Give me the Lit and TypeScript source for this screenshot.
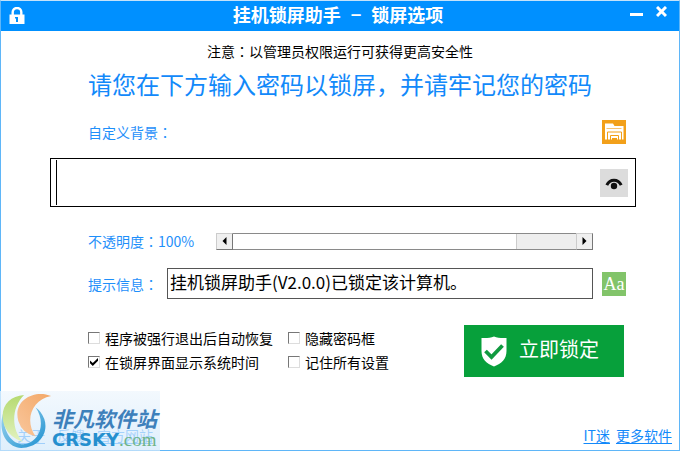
import { LitElement, html, css, svg } from "lit";
import { customElement, state } from "lit/decorators.js";

const colon = html`<span class="colon">：</span>`;

const lockIcon = html`<svg width="16" height="18" viewBox="0 0 16 18" aria-hidden="true">
  <path d="M3.7 8V5a4.3 4 0 0 1 8.6 0v3" fill="none" stroke="#fff" stroke-width="2.4" />
  <path d="M.5 7.5h15V17H.5z" fill="#fff" />
  <path d="M6 10h3v5H7v-3.4H6z" fill="#0090ff" />
</svg>`;

const folderIcon = html`<svg width="24" height="24" viewBox="0 0 24 24" aria-hidden="true">
  <path d="M3 19.5V3.5h8l1.500 2.500h9v13.500z" fill="#fff" />
  <path d="M4.500 8.500h15" stroke="#f6c372" fill="none" />
  <path d="M5.500 20v-8h14v8" fill="none" stroke="#f2a01a" />
  <path d="M8.500 20v-4.500h8V20" fill="none" stroke="#f2a01a" />
  <path d="M10 20v-2h5v2" fill="#f2a01a" />
</svg>`;

const eyeIcon = html`<svg width="28" height="28" viewBox="0 0 28 28" aria-hidden="true">
  <path d="M6.8 16.2C10 9.6 18 9.6 21.2 16.2" fill="none" stroke="#111" stroke-width="3" />
  <circle cx="14" cy="17" r="3.2" fill="#111" />
</svg>`;

const shieldIcon = html`<svg width="26" height="31" viewBox="0 0 26 31" aria-hidden="true">
  <path d="M13 .5c3.5 1.5 8 1.8 12.5 1.5V15c0 8-5 12.5-12.5 15.5C5.5 27.5.5 23 .5 15V2C5 2.3 9.5 2 13 .5z" fill="#fff" />
  <path d="M4.500 15l6 6L21.500 9.500" fill="none" stroke="#109a40" stroke-width="3.800" />
</svg>`;

const swirl = svg`
  <defs>
    <linearGradient id="ring" x1="0" y1="0" x2="1" y2="1">
      <stop offset="0" stop-color="#a5d9f0" /><stop offset="1" stop-color="#1b8fd0" />
    </linearGradient>
    <linearGradient id="leaf" x1="0" y1="0" x2="0" y2="1">
      <stop offset="0" stop-color="#b5da70" /><stop offset="1" stop-color="#e3f2c0" />
    </linearGradient>
    <linearGradient id="flame" x1="1" y1="0" x2="0" y2="1">
      <stop offset="0" stop-color="#f3a868" /><stop offset="1" stop-color="#f9c79d" />
    </linearGradient>
  </defs>
  <path d="M4 20C-3 38 5 57 22 58C40 58 51 43 46 28Q43 20 37 16C47 30 43 49 27 54C12 56 2 40 4 20z" fill="url(#ring)" />
  <path d="M25 3C8 4-2 18 5 36Q10 47 24 52C11 38 12 16 25 3z" fill="url(#leaf)" />
  <path d="M53 4C36-3 13 8 19 30Q23 43 37 46C25 29 33 8 53 4z" fill="url(#flame)" />`;

@customElement("app-root")
export class AppRoot extends LitElement {
  @state() private opacity = 100;

  static styles = css`
    :host {
      display: block;
      font: 14px/20px "Noto Sans CJK SC", sans-serif;
      color: #000;
    }
    * { box-sizing: border-box; }
    button, input { font: inherit; color: inherit; margin: 0; padding: 0; border: 0; border-radius: 0; }
    svg { display: block; }
    .window {
      position: relative;
      display: flex;
      flex-direction: column;
      min-height: 100vh;
      border: 1px solid #5fb6f8;
      border-top-color: #c4e2fa;
      background: #fff;
    }
    .titlebar {
      display: grid;
      grid-template-columns: 1fr auto 1fr;
      align-items: center;
      height: 30px;
      padding: 0 12px 0 8px;
      background: #0090ff;
      color: #fff;
    }
    .title { display: flex; gap: 10px; margin: 0; font-size: 18px; line-height: 24px; padding-bottom: 4px; font-weight: 700; }
    .controls { display: flex; justify-content: flex-end; gap: 12px; padding-bottom: 8px; }
    .control { display: block; background: none; }
    .colon { font-family: "Noto Sans CJK JP", sans-serif; }
    .notice { margin: 10px 0 0; text-align: center; }
    .headline {
      margin: 7px 0 0;
      font-size: 24px;
      line-height: 32px;
      font-weight: 400;
      text-align: center;
      color: #1289fa;
    }
    .form { display: flex; flex-direction: column; padding: 20px 43px 0 49px; }
    .row { display: flex; align-items: center; gap: 9px; padding: 0 10px 0 38px; }
    .label { color: #1e8ffa; white-space: nowrap; }
    .grow { flex: 1; min-width: 0; }
    .square { flex: none; width: 24px; height: 24px; }
    .folder { background: #f2a01a; }
    .font {
      background: #82c46a;
      color: #fff;
      font-family: "Liberation Serif", serif;
      font-size: 18px;
      line-height: 24px;
      text-align: center;
    }
    .password {
      display: flex;
      align-items: center;
      height: 49px;
      margin: 14px 0 24px;
      padding: 1px 7px 1px 5px;
      border: 1px solid #000;
    }
    .password::before { content: ""; align-self: stretch; width: 1px; background: #000; }
    .secret { height: 45px; padding: 0 8px; font-size: 24px; outline: 0; background: none; }
    .eye { background: #dcdcdc; }
    .opacity { padding-right: 43px; }
    .opacity .label { width: 119px; }
    .scroll { display: flex; height: 17px; }
    .arrow {
      width: 17px;
      background: #f0f0f0;
      border: 1px solid #777;
      border-top-color: #ccc;
      border-left-color: #ccc;
      display: grid;
      place-items: center;
    }
    .range {
      appearance: none;
      height: 17px;
      background: #fff;
      border-top: 1px solid #8a8a8a;
      border-bottom: 1px solid #8a8a8a;
      outline: 0;
    }
    .range::-webkit-slider-thumb {
      appearance: none;
      width: 60px;
      height: 15px;
      background: #eee;
      border-left: 1px solid #ccc;
    }
    .message { margin-top: 17px; }
    .message .label { width: 70px; }
    .prompt {
      height: 31px;
      padding: 0 2px 4px;
      border: 1px solid #555;
      font-size: 17px;
      line-height: 24px;
      background: #fff;
    }
    .actions { align-items: flex-start; justify-content: space-between; margin-top: 26px; padding-right: 12px; }
    .checks { display: grid; grid-template-columns: 200px auto; row-gap: 4px; padding-top: 3px; }
    .check { display: flex; align-items: center; gap: 5px; height: 20px; white-space: nowrap; }
    .box {
      appearance: none;
      flex: none;
      display: grid;
      place-items: center;
      width: 12px;
      height: 12px;
      background: #fff;
      border: 1px solid #ddd;
      border-top-color: #777;
      border-left-color: #777;
    }
    .box:checked::before {
      content: "";
      width: 8px;
      height: 8px;
      background: #000;
      clip-path: polygon(0 30%, 35% 62%, 100% 0, 100% 35%, 35% 100%, 0 65%);
    }
    .lock {
      display: flex;
      align-items: center;
      gap: 12px;
      width: 160px;
      height: 52px;
      padding-left: 17px;
      background: #07a03b;
      color: #fff;
      font-size: 20px;
      line-height: 28px;
    }
    .locktext { padding-bottom: 4px; }
    .footer { display: flex; justify-content: space-between; margin-top: auto; padding: 0 7px 5px 16px; }
    .links { display: flex; gap: 6px; }
    .sitelinks { display: flex; gap: 12px; }
    .link { color: #1289fa; text-underline-offset: 2px; }
    .watermark {
      position: absolute;
      left: -1px;
      bottom: -1px;
      display: flex;
      width: 160px;
      height: 60px;
      background: linear-gradient(#eef6fdb8, #d3e9fbb8);
      pointer-events: none;
    }
    .brand { padding-top: 14px; white-space: nowrap; }
    .brandname {
      font-size: 21px;
      line-height: 26px;
      font-weight: 700;
      font-style: italic;
      color: #3d80bb;
    }
    .domain { display: flex; align-items: baseline; line-height: 18px; }
    .crsky { font: 700 18px/18px "DejaVu Sans", sans-serif; color: #258fce; }
    .com { font: 19px/18px "Liberation Serif", serif; color: #6db489; }
  `;

  private step(delta: number) {
    this.opacity = Math.max(0, Math.min(100, this.opacity + delta));
  }

  private check(text: string, checked = false) {
    return html`<label class="check"><input class="box" type="checkbox" ?checked=${checked} />${text}</label>`;
  }

  render() {
    return html`
      <div class="window">
        <header class="titlebar">
          ${lockIcon}
          <h1 class="title"><span>挂机锁屏助手</span><span>−</span><span>锁屏选项</span></h1>
          <div class="controls">
            <button class="control" aria-label="最小化">
              <svg width="14" height="12" viewBox="0 0 14 12"><path d="M0 8.5h13" stroke="#fff" stroke-width="3" /></svg>
            </button>
            <button class="control" aria-label="关闭">
              <svg width="11" height="12" viewBox="0 0 11 12"><path d="M1 1l9 9M10 1l-9 9" stroke="#fff" stroke-width="3" /></svg>
            </button>
          </div>
        </header>

        <p class="notice">注意${colon}以管理员权限运行可获得更高安全性</p>
        <h2 class="headline">请您在下方输入密码以锁屏，并请牢记您的密码</h2>

        <main class="form">
          <div class="row">
            <span class="label grow">自定义背景${colon}</span>
            <button class="square folder" aria-label="选择背景">${folderIcon}</button>
          </div>

          <div class="password">
            <input class="secret grow" type="password" aria-label="密码" />
            <button class="eye" aria-label="显示密码">${eyeIcon}</button>
          </div>

          <div class="row opacity">
            <label class="label" for="opacity">不透明度${colon}${this.opacity}%</label>
            <div class="scroll grow">
              <button class="arrow" aria-label="减少" @click=${() => this.step(-1)}>
                <svg width="5" height="8" viewBox="0 0 5 8"><path d="M4.5 0v8L.5 4z" /></svg>
              </button>
              <input id="opacity" class="range grow" type="range" min="0" max="100" .value=${String(this.opacity)}
                @input=${(e: Event) => (this.opacity = Number((e.target as HTMLInputElement).value))} />
              <button class="arrow" aria-label="增加" @click=${() => this.step(1)}>
                <svg width="5" height="8" viewBox="0 0 5 8"><path d="M.5 0v8l4-4z" /></svg>
              </button>
            </div>
          </div>

          <div class="row message">
            <label class="label" for="prompt">提示信息${colon}</label>
            <input id="prompt" class="prompt grow" type="text" value="挂机锁屏助手(V2.0.0)已锁定该计算机。" />
            <button class="square font" aria-label="字体">Aa</button>
          </div>

          <div class="row actions">
            <div class="checks">
              ${this.check("程序被强行退出后自动恢复")} ${this.check("隐藏密码框")}
              ${this.check("在锁屏界面显示系统时间", true)} ${this.check("记住所有设置")}
            </div>
            <button class="lock">${shieldIcon}<span class="locktext">立即锁定</span></button>
          </div>
        </main>

        <footer class="footer">
          <nav class="sitelinks">
            <a class="link" href="#about">关于</a>
            <a class="link" href="#feedback">反馈</a>
            <a class="link" href="#home">官方网站</a>
          </nav>
          <nav class="links">
            <a class="link" href="#it">IT迷</a>
            <a class="link" href="#more">更多软件</a>
          </nav>
        </footer>

        <div class="watermark">
          <svg width="52" height="60" viewBox="0 0 54 60" aria-hidden="true">${swirl}</svg>
          <div class="brand">
            <div class="brandname">非凡软件站</div>
            <div class="domain"><span class="crsky">CRSKY</span><span class="com">.com</span></div>
          </div>
        </div>
      </div>
    `;
  }
}
